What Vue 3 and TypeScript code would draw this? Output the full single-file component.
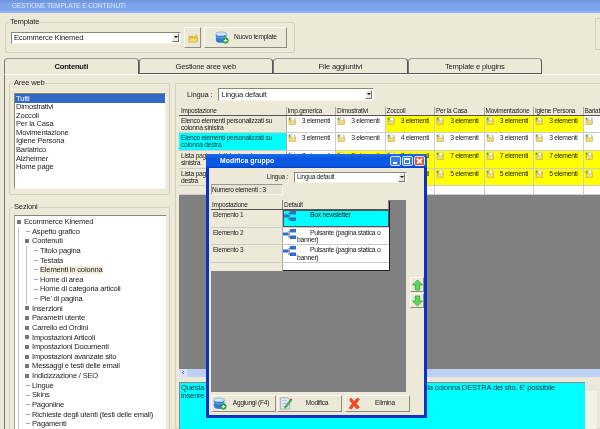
<script setup lang="ts">
const areas: string[] = ['Tutti','Dimostrativi','Zoccoli','Per la Casa','Movimentazione','Igiene Persona','Bariatrico','Alzheimer','Home page']
interface TreeRow { t: string; l: number; x?: boolean; sel?: boolean }
const tree: TreeRow[] = [
  {t:'Ecommerce Kinemed',l:0,x:true},
  {t:'Aspetto grafico',l:1},{t:'Contenuti',l:1,x:true},
  {t:'Titolo pagina',l:2},{t:'Testata',l:2},{t:'Elementi in colonna',l:2,sel:true},{t:'Home di area',l:2},{t:'Home di categoria articoli',l:2},{t:"Pie' di pagina",l:2},
  {t:'Inserzioni',l:1,x:true},{t:'Parametri utente',l:1,x:true},{t:'Carrello ed Ordini',l:1,x:true},{t:'Impostazioni Articoli',l:1,x:true},{t:'Impostazioni Documenti',l:1,x:true},{t:'Impostazioni avanzate sito',l:1,x:true},{t:'Messaggi e testi delle email',l:1,x:true},{t:'Indicizzazione / SEO',l:1,x:true},
  {t:'Lingue',l:1},{t:'Skins',l:1},{t:'Pagonline',l:1},{t:'Richieste degli utenti (testi delle email)',l:1},{t:'Pagamenti',l:1},
]
const tabs: string[] = ['Contenuti','Gestione aree web','File aggiuntivi','Template e plugins']
const heads: string[] = ['Impostazione','Imp.generica','Dimostrativi','Zoccoli','Per la Casa','Movimentazione','Igiene Persona','Bariatrico']
interface Cell { v: string; y: boolean }
interface Row { name: string; cyan?: boolean; h: number; cells: Cell[] }
const c = (v: string, y = false): Cell => ({ v, y })
const rows: Row[] = [
  {name:'Elenco elementi personalizzati su colonna sinistra',h:17,cells:[c('3 elementi'),c('3 elementi'),c('3 elementi',true),c('3 elementi',true),c('3 elementi',true),c('3 elementi',true),c('')]},
  {name:'Elenco elementi personalizzati su colonna destra',cyan:true,h:18,cells:[c('3 elementi'),c('3 elementi'),c('4 elementi'),c('3 elementi'),c('3 elementi'),c('3 elementi'),c('')]},
  {name:'Lista pagine statiche in colonna sinistra',h:18,cells:[c('7 elementi'),c('7 elementi',true),c('7 elementi',true),c('7 elementi',true),c('7 elementi',true),c('7 elementi',true),c('',true)]},
  {name:'Lista pagine statiche in colonna destra',h:17,cells:[c('5 elementi',true),c('5 elementi',true),c('5 elementi',true),c('5 elementi',true),c('5 elementi',true),c('5 elementi',true),c('',true)]},
]
const items = [
  {n:'Elemento 1',v:'Box newsletter',sel:true},
  {n:'Elemento 2',v:'Pulsante (pagina statica o banner)',sel:false},
  {n:'Elemento 3',v:'Pulsante (pagina statica o banner)',sel:false},
]
</script>

<template>
  <div class="app">
    <svg class="defs" width="0" height="0">
      <symbol id="app" viewBox="0 0 12 12">
        <rect x="1" y="4" width="3" height="3" fill="#c33"/><rect x="5" y="6" width="4" height="4" fill="#3a3"/><rect x="2" y="8" width="3" height="3" fill="#36c"/><path d="M4 7l6-6" stroke="#e33" stroke-width="1.6"/><rect x="5" y="3" width="3" height="3" fill="#eee"/>
      </symbol>
      <symbol id="folder" viewBox="0 0 10 10">
        <path d="M1 3h3l1-1h4v7H2z" fill="#f2d868" stroke="#a89030" stroke-width=".6"/><rect x="4" y="1" width="4" height="4" fill="#fff" stroke="#aaa" stroke-width=".4"/><path d="M2 5h8l-1 4H1z" fill="#f5e080" stroke="#b09a30" stroke-width=".5"/><circle cx="2" cy="2" r="1.3" fill="#3ea83e"/>
      </symbol>
      <symbol id="bigfolder" viewBox="0 0 12 12">
        <path d="M1 4h4l1-1h5v7H2z" fill="#eec93c" stroke="#b8931c" stroke-width=".6"/><path d="M2 6h10l-2 5H1z" fill="#f8e070" stroke="#b8931c" stroke-width=".6"/><path d="M6 1l3 1-1 2-3-1z" fill="#fff" stroke="#aaa" stroke-width=".4"/>
      </symbol>
      <symbol id="db" viewBox="0 0 16 14">
        <path d="M1 3v7c0 1.8 3 3 6 3s6-1.200 6-3V3z" fill="#2f78d8"/><ellipse cx="7" cy="3" rx="6" ry="2.300" fill="#cfe3f8" stroke="#5c8fc8" stroke-width=".6"/><path d="M1 6c2 2 10 2 12 0" fill="none" stroke="#8fc0f0" stroke-width=".8"/><circle cx="12" cy="10.500" r="3.500" fill="#2c9c3c"/><path d="M12 8.500v4M10 10.500h4" stroke="#d8f8d8" stroke-width="1.300"/>
      </symbol>
      <symbol id="net" viewBox="0 0 13 10">
        <path d="M3 5h4M6 2v7M6 2h3M6 8h3" stroke="#445" stroke-width=".7" fill="none"/><rect x="0" y="3.500" width="5" height="3" fill="#2b6fd0"/><rect x="7" y="0" width="6" height="3.500" fill="#2b6fd0"/><rect x="7" y="6.500" width="6" height="3.500" fill="#2b6fd0"/>
      </symbol>
      <symbol id="edit" viewBox="0 0 14 14">
        <path d="M1 1h8l2 2v10H1z" fill="#dfe8f5" stroke="#8090a8" stroke-width=".7"/><path d="M3 4h5M3 7h4M3 10h5" stroke="#9ab" stroke-width=".7"/><path d="M6 10l6-8 1.500 1.200-6 8-2 .8z" fill="#58b848" stroke="#2a7a2a" stroke-width=".5"/><path d="M12 2l1.500 1.200" stroke="#e33" stroke-width="1.200"/>
      </symbol>
      <symbol id="del" viewBox="0 0 14 14">
        <path d="M2 3l3 4-3.500 5 3 1L7 9.500 10 13l3-2-3.500-4L13 2.500 10.500 1 7 4.800 4 1z" fill="#f04c28" stroke="#c83018" stroke-width=".5"/>
      </symbol>
      <symbol id="up" viewBox="0 0 12 12"><path d="M6 .5L11.500 6H8.500v5.500h-5V6H.5z" fill="#58d858" stroke="#289828" stroke-width=".7"/></symbol>
      <symbol id="down" viewBox="0 0 12 12"><path d="M6 11.500L11.500 6H8.500V.5h-5V6H.5z" fill="#58d858" stroke="#289828" stroke-width=".7"/></symbol>
    </svg>

    <div class="titlebar"><svg class="ti"><use href="#app"/></svg><span>GESTIONE TEMPLATE E CONTENUTI</span></div>

    <div class="toprow">
      <div class="group tplgroup">
        <span class="legend">Template</span>
        <div class="select tplselect"><span>Ecommerce Kinemed</span><i class="arrow"></i></div>
        <button class="btn folderbtn"><svg class="fi"><use href="#bigfolder"/></svg></button>
        <button class="btn newbtn"><svg class="ni"><use href="#db"/></svg><span>Nuovo template</span></button>
      </div>
      <div class="sidebox"></div>
    </div>

    <div class="tabs">
      <div v-for="(t,i) in tabs" :key="t" class="tab" :class="{active:i===0}">{{ t }}</div>
    </div>

    <div class="panel">
      <div class="left">
        <div class="group areas">
          <span class="legend">Aree web</span>
          <div class="listbox">
            <div v-for="(a,i) in areas" :key="a" class="li" :class="{on:i===0}">{{ a }}</div>
          </div>
        </div>
        <div class="group sections">
          <span class="legend">Sezioni</span>
          <div class="tree">
            <div v-for="r in tree" :key="r.t" class="node" :class="'l'+r.l">
              <i v-if="r.x" class="exp"></i><i v-else class="dash"></i>
              <span :class="{hl:r.sel}">{{ r.t }}</span>
            </div>
          </div>
        </div>
      </div>

      <div class="group right">
        <div class="langrow"><span>Lingua :</span><div class="select langsel"><span>Lingua default</span><i class="arrow"></i></div></div>
        <div class="grid">
          <div class="ghead">
            <div v-for="h in heads" :key="h" class="gh">{{ h }}</div>
          </div>
          <div v-for="r in rows" :key="r.name" class="grow" :style="{height:r.h+'px'}">
            <div class="gname" :class="{cy:r.cyan}">{{ r.name }}</div>
            <div v-for="(x,i) in r.cells" :key="i" class="gcell" :class="{yl:x.y}">
              <svg class="ci"><use href="#folder"/></svg><span>{{ x.v }}</span>
            </div>
          </div>
          <div class="grow blank">
            <div class="gname"></div><div v-for="n in 7" :key="n" class="gcell"></div>
          </div>
          <div class="gfill"></div>
          <div class="hscroll"><span class="sb">‹</span></div>
        </div>
        <div class="descrow">
          <div class="desc">Questa sezione consente di personalizzare i gruppi di elementi visualizzati nella colonna DESTRA del sito. E' possibile inserire elementi personalizzati.</div>
          <div class="vscroll"><span class="sb top"></span></div>
        </div>
      </div>
    </div>

    <div class="dialog">
      <div class="dtitle">
        <svg class="ti"><use href="#app"/></svg><b>Modifica gruppo</b>
        <div class="wbtns"><i class="wb min"></i><i class="wb max"></i><i class="wb close"></i></div>
      </div>
      <div class="dbody">
        <div class="dlang"><span>Lingua :</span><div class="select dsel"><span>Lingua default</span><i class="arrow"></i></div></div>
        <div class="numbox">Numero elementi : 3</div>
        <div class="dmid">
          <div class="dgrid">
            <div class="dtable">
              <div class="dhead"><div class="dh d1">Impostazione</div><div class="dh d2">Default</div></div>
              <div v-for="it in items" :key="it.n" class="drow">
                <div class="dn">{{ it.n }}</div>
                <div class="dv" :class="{sel:it.sel}"><svg class="neti"><use href="#net"/></svg><span>{{ it.v }}</span></div>
              </div>
              <div class="drow last"><div class="dn"></div><div class="dv"></div></div>
            </div>
          </div>
          <div class="arrows">
            <button class="btn ab"><svg class="ai"><use href="#up"/></svg></button>
            <button class="btn ab"><svg class="ai"><use href="#down"/></svg></button>
          </div>
        </div>
        <div class="dbtns">
          <button class="btn db"><svg class="bi"><use href="#db"/></svg><span>Aggiungi (F4)</span></button>
          <button class="btn db"><svg class="bi"><use href="#edit"/></svg><span>Modifica</span></button>
          <button class="btn db b3"><svg class="bi"><use href="#del"/></svg><span>Elimina</span></button>
        </div>
      </div>
    </div>
  </div>
</template>

<style>
html, body { margin: 0; background: #ECE9D8; }
</style>

<style scoped>
.app { position: relative; width: 600px; height: 429px; overflow: hidden; background: #ECE9D8; font: 7.6px/1 "Liberation Sans", Arial, sans-serif; letter-spacing: -.2px; color: #1c1c1c; filter: blur(.4px); white-space: nowrap; }
.defs { position: absolute; }
.titlebar { height: 13px; display: flex; align-items: center; padding-left: 2px; background: linear-gradient(#6f94dc, #7da4ec 40%, #7ea6ee 80%, #9cbcf0); color: #dbe5f6; font-size: 6.6px; letter-spacing: -.1px; }
.ti { width: 9px; height: 9px; margin-right: 1px; flex: none; }
.toprow { display: flex; justify-content: space-between; align-items: flex-start; }
.group { position: relative; border: 1px solid #d4d0bd; border-radius: 2px; box-sizing: border-box; }
.legend { position: absolute; left: 3px; top: -5px; background: #ECE9D8; padding: 0 1px; }
.tplgroup { margin: 9px 0 0 5px; width: 290px; height: 31px; display: flex; align-items: center; padding-left: 5px; }
.sidebox { width: 5px; height: 32px; margin-top: 5px; border: 1px solid #d4d0bd; border-right: 0; box-sizing: border-box; }
.select { display: flex; align-items: center; justify-content: space-between; box-sizing: border-box; background: #fff; border: 1px solid; border-color: #8a8778 #f5f3ea #f5f3ea #8a8778; padding-left: 2px; }
.tplselect { width: 170px; height: 12px; }
.arrow { width: 7px; height: 9px; margin-right: 1px; background: #ECE9D8; border: 1px solid; border-color: #fff #777 #777 #fff; box-sizing: border-box; position: relative; flex: none; }
.arrow::after { content: ""; position: absolute; left: 1px; top: 2px; border: 2px solid transparent; border-top: 2px solid #111; border-bottom: 0; }
.btn { font: inherit; letter-spacing: inherit; color: #1c1c1c; background: #ECE9D8; border: 1px solid; border-color: #fbfaf4 #8f8c7e #8f8c7e #fbfaf4; padding: 0; box-sizing: border-box; display: flex; align-items: center; }
.folderbtn { width: 17px; height: 21px; margin-left: 3px; justify-content: center; }
.fi { width: 10px; height: 10px; }
.newbtn { width: 83px; height: 21px; margin-left: 3px; padding-left: 10px; font-size: 6.600px; letter-spacing: -.25px; }
.ni { width: 14px; height: 13px; margin-right: 5px; }
.tabs { display: flex; margin: 5px 0 0 4px; height: 16px; }
.tab { width: 134.500px; box-sizing: border-box; border: 1px solid #666; border-color: #999 #555 #555 #777; border-radius: 4px 4px 0 0; display: flex; align-items: center; justify-content: center; padding-top: 1px; }
.tab.active { font-weight: 700; border-bottom: 0; color: #111; }
.panel { display: flex; align-items: flex-start; gap: 5px; height: 355px; margin-left: 4px; padding: 8px 0 0 4px; box-sizing: border-box; border-left: 1px solid #777; border-top: 1px solid #fbfaf4; }
.left { width: 161px; flex: none; display: flex; flex-direction: column; }
.areas { height: 112px; padding: 9px 3px 0 4px; }
.listbox { height: 96px; background: #fff; border: 1px solid; border-color: #8a8778 #f5f3ea #f5f3ea #8a8778; box-sizing: border-box; }
.li { height: 8.600px; line-height: 8.600px; padding-left: 1px; }
.li.on { height: 9px; line-height: 9px; background: #316AC5; color: #fff; }
.sections { margin-top: 12px; height: 240px; padding: 7px 3px 0 4px; }
.tree { height: 230px; background: #fff; border-top: 1px solid #8a8778; border-left: 1px solid #a8a598; padding-top: 1px; box-sizing: border-box; }
.node { height: 9.640px; display: flex; align-items: center; }
.node.l0 { padding-left: 1px; }
.node.l1 { padding-left: 9px; background: linear-gradient(#c4c4c4, #c4c4c4) 3px 0 / 1px 100% no-repeat; }
.node.l2 { padding-left: 17px; background: linear-gradient(#c4c4c4, #c4c4c4) 3px 0 / 1px 100% no-repeat, linear-gradient(#c4c4c4, #c4c4c4) 11px 0 / 1px 100% no-repeat; }
.exp { width: 4px; height: 4px; background: #777; margin: 0 3px 0 1px; flex: none; }
.dash { width: 4px; height: 1px; margin: 0 2px 0 2px; background: #aaa; flex: none; }
.hl { background: #F2EEDB; padding-right: 1px; }
.right { width: 427px; flex: none; height: 346px; border-right: 0; padding: 0 0 0 3px; }
.langrow { display: flex; align-items: flex-start; height: 23px; padding: 4px 0 0 8px; box-sizing: border-box; line-height: 13px; }
.langsel { width: 156px; height: 13px; margin-left: 6px; }
.grid { height: 270px; background: #808080; display: flex; flex-direction: column; box-sizing: border-box; font-size: 6.800px; letter-spacing: -.3px; }
.ghead { height: 8px; display: flex; background: #ECE9D8; border-bottom: 1px solid #555; flex: none; box-sizing: content-box; font-size: 6.500px; letter-spacing: -.25px; }
.gh { width: 49.500px; flex: none; box-sizing: border-box; padding-left: 1px; border-right: 1px solid #aaa; line-height: 8px; overflow: hidden; }
.gh:first-child { width: 107.500px; padding-left: 2px; }
.grow { display: flex; flex: none; border-bottom: 1px solid #ccc; box-sizing: border-box; }
.grow.blank { height: 9px; }
.gname { width: 107.500px; flex: none; box-sizing: border-box; padding: 1px 2px 0 2px; line-height: 7.400px; background: #ECE9D8; border-right: 1px solid #aaa; white-space: normal; }
.gname.cy { background: #00FFFF; color: #0a3a3a; }
.gcell { width: 49.500px; flex: none; box-sizing: border-box; background: #fff; border-right: 1px solid #ccc; display: flex; justify-content: space-between; align-items: flex-start; padding: 1px 5px 0 1px; line-height: 7px; }
.gcell.yl { background: #FFFF00; }
.ci { width: 8px; height: 8px; flex: none; }
.gfill { flex: 1; }
.hscroll { height: 8px; background: #bcd0f4; flex: none; }
.sb { display: block; width: 8px; height: 8px; background: #d6e2fa; color: #223; line-height: 7px; text-align: center; }
.descrow { display: flex; margin-top: 5px; height: 47px; }
.desc { width: 406px; flex: none; box-sizing: border-box; padding: 1px 12px 0 1px; background: #00FFFF; color: #103040; line-height: 8px; border: 1px solid #888; border-width: 1px 0 0 1px; white-space: normal; }
.vscroll { width: 12px; background: #F3F1E6; }
.vscroll .top { width: 12px; height: 9px; background: #E8E8DC; }
.dialog { position: absolute; left: 206px; top: 154px; width: 221px; height: 264px; box-sizing: border-box; background: #0A32C8; border-radius: 4px 4px 0 0; padding: 0 3px 3px; display: flex; flex-direction: column; font-size: 6.500px; letter-spacing: -.25px; }
.dtitle { height: 14px; flex: none; margin: 0 -3px; padding: 0 2px 0 3px; display: flex; align-items: center; border-radius: 4px 4px 0 0; background: linear-gradient(#1f6cf0, #0758e0 30%, #0a5ae8 80%, #0340c8); color: #fff; font-size: 6.8px; letter-spacing: .1px; }
.dtitle .ti { margin-right: 2px; }
.wbtns { display: flex; gap: 1px; margin-left: auto; }
.wb { width: 11px; height: 10px; border: 1px solid #d8e4fa; border-radius: 2px; background: #3a78ee; box-sizing: border-box; display: block; position: relative; }
.min::after { content: ""; position: absolute; left: 2px; bottom: 1px; width: 4px; height: 2px; background: #fff; }
.max::after { content: ""; position: absolute; left: 1px; top: 1px; width: 6px; height: 6px; border: 1px solid #fff; border-top-width: 2px; box-sizing: border-box; }
.close { background: #E0502C; }
.close::before, .close::after { content: ""; position: absolute; left: 1px; top: 3px; width: 7px; height: 1.500px; background: #fff; transform: rotate(45deg); }
.close::after { transform: rotate(-45deg); }
.dbody { flex: 1; background: #ECE9D8; padding: 4px 0 0 2px; display: flex; flex-direction: column; min-height: 0; }
.dlang { display: flex; align-items: center; height: 10px; }
.dlang > span { width: 77px; text-align: right; flex: none; }
.dsel { width: 113px; height: 11px; margin-left: 6px; }
.numbox { width: 72px; height: 11px; margin-top: 2px; box-sizing: border-box; border: 1px solid; border-color: #999 #f8f6ec #f8f6ec #999; line-height: 9px; background: #E6E3D2; }
.dmid { display: flex; margin-top: 5px; }
.dgrid { width: 195px; height: 192px; background: #808080; flex: none; }
.dtable { width: 178px; height: 70px; background: #fff; box-shadow: 1px 1px 0 #222; }
.dhead { display: flex; height: 9px; background: #ECE9D8; border-bottom: 1px solid #555; }
.dh { box-sizing: border-box; line-height: 9px; padding-left: 1px; border-right: 1px solid #888; }
.d1 { width: 72px; }
.d2 { width: 106px; }
.drow { display: flex; height: 17.600px; border-bottom: 1px solid #ccc; box-sizing: border-box; }
.drow.last { height: 8px; border: 0; }
.dn { width: 72px; flex: none; box-sizing: border-box; background: #ECE9D8; padding: 2px 0 0 2px; border-right: 1px solid #aaa; }
.dv { flex: 1; min-width: 0; display: flex; align-items: flex-start; box-sizing: border-box; padding-top: 1px; line-height: 7.600px; font-size: 6.800px; letter-spacing: -.3px; }
.dv.sel { background: #00FFFF; outline: 1px solid #555; outline-offset: -1px; }
.neti { width: 13px; height: 10px; margin-right: 1px; flex: none; }
.dv span { text-indent: 13px; white-space: normal; }
.arrows { display: flex; flex-direction: column; justify-content: center; gap: 1px; padding: 0 0 7px 4px; }
.ab { width: 14px; height: 15px; justify-content: center; }
.ai { width: 11px; height: 12px; }
.dbtns { display: flex; gap: 1px; margin-top: 3px; }
.db { width: 65px; height: 17px; font-size: 6.600px; letter-spacing: -.25px; padding-left: 1px; }
.db span { flex: 1; text-align: center; }
.b3 { margin-left: 2px; }
.bi { width: 14px; height: 13px; flex: none; }
</style>
